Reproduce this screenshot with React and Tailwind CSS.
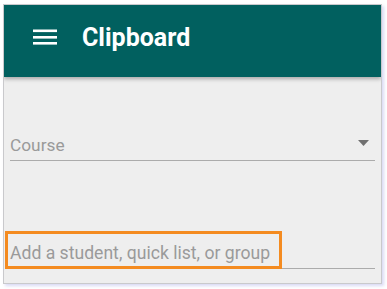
export default function App() {
  return (
    <div className="w-[387px] h-[289px] bg-white pt-[4px] pl-[3px]" style={{ fontFamily: 'Roboto, "Noto Sans", sans-serif' }}>
      <div className="w-[379px] h-[280px] border border-[#c9c9cc] bg-[#eeeeee] shadow-[2px_2px_3px_rgba(170,170,230,0.45)] flex flex-col overflow-hidden">
        <div className="relative z-10 h-[72px] shrink-0 bg-[#01605f] shadow-[0_2px_4px_rgba(0,0,0,0.3)] flex items-center pb-[8px] pl-[29px]">
          <svg width="24" height="16" viewBox="0 0 24 16" className="shrink-0">
            <rect x="0" y="0.5" width="24" height="2.6" fill="#ffffff" />
            <rect x="0" y="7" width="24" height="2.6" fill="#ffffff" />
            <rect x="0" y="13" width="24" height="2.6" fill="#ffffff" />
          </svg>
          <span className="ml-[25px] text-[25px] leading-[25px] font-bold text-white">Clipboard</span>
        </div>
        <div className="px-[6px]">
          <div className="mt-[56px] flex items-center justify-between border-b border-[#ababab] pb-[3px]">
            <span className="text-[17.3px] leading-[24px] text-[#9a9a9a]">Course</span>
            <svg width="11" height="6" viewBox="0 0 11 6" className="mr-[6px] mb-[4px]">
              <path d="M0 0 L5.5 6 L11 0 Z" fill="#707070" />
            </svg>
          </div>
          <div className="relative mt-[80px] border-b border-[#ababab] pb-[3px]">
            <span className="block text-[17.6px] leading-[24px] text-[#9a9a9a] whitespace-nowrap">Add a student, quick list, or group</span>
            <div className="absolute left-[-5px] top-[-10px] w-[277px] h-[38px] border-[3px] border-[#f48b20]" />
          </div>
        </div>
      </div>
    </div>
  );
}
